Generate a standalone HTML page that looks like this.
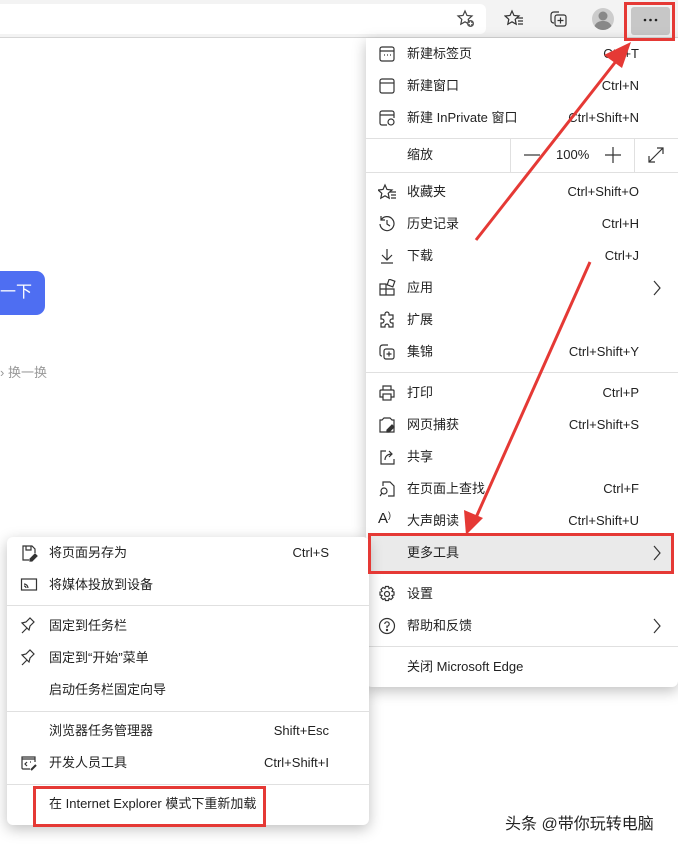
<!DOCTYPE html>
<html><head><meta charset="utf-8">
<style>
*{margin:0;padding:0;box-sizing:border-box}
body{width:678px;height:845px;overflow:hidden;background:#fff;position:relative;font-family:"Liberation Sans","Noto Sans CJK SC",sans-serif;font-size:13px;color:#222}
.abs{position:absolute}
.tb{left:0;top:0;width:678px;height:38px;background:#f3f3f3;border-bottom:1px solid #d6d6d6}
.addr{left:0;top:4px;width:486px;height:30px;background:#fff;border-radius:0 6px 6px 0}
.menu{background:#fff;box-shadow:0 4px 14px rgba(0,0,0,.25);border-radius:6px}
.row{position:absolute;height:20px;line-height:20px;white-space:nowrap}
.sc{position:absolute;height:20px;line-height:20px;text-align:right;white-space:nowrap}
.sep{position:absolute;height:1px;background:#e0e0e0}
svg.i{position:absolute;width:18px;height:18px}
</style></head><body>
<div class="abs tb"></div>
<div class="abs addr"></div>
<!-- toolbar icons -->
<svg class="abs" style="left:456px;top:9px" width="20" height="20" viewBox="0 0 20 20" fill="none" stroke="#444" stroke-width="1.2"><path d="M9 2l2 4.5 5 .5-3.8 3.3 1 4.9L9 12.8 4.8 15.2l1-4.9L2 7l5-.5z"/><circle cx="14.5" cy="14.5" r="3.5" fill="#555" stroke="none"/><path d="M14.5 12.5v4M12.5 14.5h4" stroke="#fff"/></svg>
<svg class="abs" style="left:504px;top:9px" width="20" height="20" viewBox="0 0 20 20" fill="none" stroke="#333" stroke-width="1.2"><path d="M8 2l2 4.5 5 .5-3.8 3.3 1 4.9L8 12.8 3.8 15.2l1-4.9L1 7l5-.5z"/><path d="M13 9h6M14 12h5M14 15h5"/></svg>
<svg class="abs" style="left:549px;top:9px" width="20" height="20" viewBox="0 0 20 20" fill="none" stroke="#333" stroke-width="1.2"><path d="M5 14c-2 0-3-1-3-3V6c0-2 1-3 3-3h5"/><rect x="6" y="6" width="11" height="11" rx="2"/><path d="M11.5 8.5v6M8.5 11.5h6"/></svg>
<svg class="abs" style="left:591px;top:7px" width="24" height="24" viewBox="0 0 24 24"><circle cx="12" cy="12" r="11" fill="#ccc"/><circle cx="12" cy="9" r="4.5" fill="#888"/><path d="M3.5 19c2-4 5-5 8.5-5s6.5 1 8.5 5A11 11 0 0 1 3.5 19z" fill="#888"/></svg>
<div class="abs" style="left:631px;top:7px;width:39px;height:28px;background:#c7c7c7;border-radius:3px"></div>
<svg class="abs" style="left:631px;top:7px" width="39" height="28"><circle cx="14" cy="13" r="1.3" fill="#222"/><circle cx="19.5" cy="13" r="1.3" fill="#222"/><circle cx="25" cy="13" r="1.3" fill="#222"/></svg>

<!-- page content -->
<div class="abs" style="left:-10px;top:271px;width:55px;height:44px;background:#4e6ef2;border-radius:9px;color:#fff;font-size:16px;line-height:44px;padding-left:10px">一下</div>
<div class="abs" style="left:0;top:362px;color:#999;font-size:13px">› 换一换</div>

<!-- main menu -->
<div class="abs menu" style="left:366px;top:38px;width:312px;height:649px;border-radius:0 0 6px 6px"></div>
<div class="abs" style="left:368px;top:536px;width:305px;height:35px;background:#eaeaea"></div>
<div class="sep" style="left:366px;top:138px;width:312px"></div>
<div class="sep" style="left:366px;top:172px;width:312px"></div>
<div class="sep" style="left:510px;top:138px;width:1px;height:34px"></div>
<div class="sep" style="left:634px;top:138px;width:1px;height:34px"></div>
<div class="sep" style="left:366px;top:372px;width:312px"></div>
<div class="sep" style="left:366px;top:646px;width:312px"></div>

<div class="row" style="left:407px;top:44px">新建标签页</div><div class="sc" style="right:39px;top:44px">Ctrl+T</div>
<div class="row" style="left:407px;top:76px">新建窗口</div><div class="sc" style="right:39px;top:76px">Ctrl+N</div>
<div class="row" style="left:407px;top:108px">新建 InPrivate 窗口</div><div class="sc" style="right:39px;top:108px">Ctrl+Shift+N</div>
<div class="row" style="left:407px;top:145px">缩放</div>
<svg class="abs" style="left:523px;top:146px" width="18" height="18" stroke="#333" stroke-width="1.2"><path d="M1 9h16"/></svg>
<div class="row" style="left:556px;top:145px">100%</div>
<svg class="abs" style="left:604px;top:146px" width="18" height="18" stroke="#333" stroke-width="1.2"><path d="M1 9h16M9 1v16"/></svg>
<svg class="abs" style="left:647px;top:146px" width="18" height="18" viewBox="0 0 18 18" fill="none" stroke="#333" stroke-width="1.2"><path d="M2 16L16 2M10 2h6v6M2 10v6h6"/></svg>
<div class="row" style="left:407px;top:182px">收藏夹</div><div class="sc" style="right:39px;top:182px">Ctrl+Shift+O</div>
<div class="row" style="left:407px;top:214px">历史记录</div><div class="sc" style="right:39px;top:214px">Ctrl+H</div>
<div class="row" style="left:407px;top:246px">下载</div><div class="sc" style="right:39px;top:246px">Ctrl+J</div>
<div class="row" style="left:407px;top:278px">应用</div>
<div class="row" style="left:407px;top:310px">扩展</div>
<div class="row" style="left:407px;top:342px">集锦</div><div class="sc" style="right:39px;top:342px">Ctrl+Shift+Y</div>
<div class="row" style="left:407px;top:383px">打印</div><div class="sc" style="right:39px;top:383px">Ctrl+P</div>
<div class="row" style="left:407px;top:415px">网页捕获</div><div class="sc" style="right:39px;top:415px">Ctrl+Shift+S</div>
<div class="row" style="left:407px;top:447px">共享</div>
<div class="row" style="left:407px;top:479px">在页面上查找</div><div class="sc" style="right:39px;top:479px">Ctrl+F</div>
<div class="row" style="left:407px;top:511px">大声朗读</div><div class="sc" style="right:39px;top:511px">Ctrl+Shift+U</div>
<div class="row" style="left:407px;top:543px">更多工具</div>
<div class="row" style="left:407px;top:584px">设置</div>
<div class="row" style="left:407px;top:616px">帮助和反馈</div>
<div class="row" style="left:407px;top:657px">关闭 Microsoft Edge</div>
<svg class="abs" style="left:650px;top:279px" width="14" height="18" fill="none" stroke="#333" stroke-width="1.2"><path d="M4 2l6 7-6 7"/></svg>
<svg class="abs" style="left:650px;top:544px" width="14" height="18" fill="none" stroke="#333" stroke-width="1.2"><path d="M4 2l6 7-6 7"/></svg>
<svg class="abs" style="left:650px;top:617px" width="14" height="18" fill="none" stroke="#333" stroke-width="1.2"><path d="M4 2l6 7-6 7"/></svg>

<!-- main menu icons -->
<svg class="i" style="left:378px;top:45px" viewBox="0 0 18 18" fill="none" stroke="#333" stroke-width="1.2"><rect x="2" y="2" width="14" height="14" rx="2"/><path d="M2 6h14M6 10h1M9 10h1M12 10h1"/></svg>
<svg class="i" style="left:378px;top:77px" viewBox="0 0 18 18" fill="none" stroke="#333" stroke-width="1.2"><rect x="2" y="2" width="14" height="14" rx="2"/><path d="M2 6h14"/></svg>
<svg class="i" style="left:378px;top:109px" viewBox="0 0 18 18" fill="none" stroke="#333" stroke-width="1.2"><path d="M9 16H4a2 2 0 0 1-2-2V4a2 2 0 0 1 2-2h10a2 2 0 0 1 2 2v5M2 6h14"/><circle cx="13" cy="13" r="3"/></svg>
<svg class="i" style="left:378px;top:183px" viewBox="0 0 18 18" fill="none" stroke="#333" stroke-width="1.2"><path d="M7 2l2 4.5 5 .5-3.8 3.3 1 4.9L7 12.8 2.8 15.2l1-4.9L0 7l5-.5z"/><path d="M12 9h6M13 12h5M13 15h5"/></svg>
<svg class="i" style="left:378px;top:215px" viewBox="0 0 18 18" fill="none" stroke="#333" stroke-width="1.2"><path d="M3 5a7 7 0 1 1-1 4M3 1v4h4M9 5v4l3 2"/></svg>
<svg class="i" style="left:378px;top:247px" viewBox="0 0 18 18" fill="none" stroke="#333" stroke-width="1.2"><path d="M9 2v11M4 8l5 5 5-5M3 16h12"/></svg>
<svg class="i" style="left:378px;top:279px" viewBox="0 0 18 18" fill="none" stroke="#333" stroke-width="1.2"><path d="M2 5h6v11H2zM8 10h8v6H8zM2 10h6"/><rect x="10" y="1" width="6" height="6" transform="rotate(20 13 4)"/></svg>
<svg class="i" style="left:378px;top:311px" viewBox="0 0 18 18" fill="none" stroke="#333" stroke-width="1.2"><path d="M7 3a2 2 0 0 1 4 0v1h4v4h-1a2 2 0 0 0 0 4h1v4h-4v-1a2 2 0 0 0-4 0v1H3v-4h1a2 2 0 0 0 0-4H3V4h4z"/></svg>
<svg class="i" style="left:378px;top:343px" viewBox="0 0 18 18" fill="none" stroke="#333" stroke-width="1.2"><path d="M4 13c-2 0-2-1-2-3V5c0-2 1-3 3-3h5"/><rect x="6" y="6" width="10" height="10" rx="2"/><path d="M11 8.5v5M8.5 11h5"/></svg>
<svg class="i" style="left:378px;top:384px" viewBox="0 0 18 18" fill="none" stroke="#333" stroke-width="1.2"><path d="M5 6V2h8v4M5 13H2V7a1 1 0 0 1 1-1h12a1 1 0 0 1 1 1v6h-3"/><rect x="5" y="10" width="8" height="6"/></svg>
<svg class="i" style="left:378px;top:416px" viewBox="0 0 18 18" fill="none" stroke="#333" stroke-width="1.2"><path d="M6 2h6l2 2h2v12H2V4h2z"/><path d="M9 14l5-5 2 2-5 5H9z" fill="#333"/></svg>
<svg class="i" style="left:378px;top:448px" viewBox="0 0 18 18" fill="none" stroke="#333" stroke-width="1.2"><path d="M8 3H3v13h13v-5M7 12c0-4 3-6 7-6M11 3l3 3-3 3"/></svg>
<svg class="i" style="left:378px;top:480px" viewBox="0 0 18 18" fill="none" stroke="#333" stroke-width="1.2"><path d="M5 6V2h7l4 4v10h-6"/><circle cx="6" cy="11" r="3"/><path d="M4 13l-2 3"/></svg>
<div class="abs" style="left:378px;top:510px;font-size:15px">A<span style="font-size:9px;vertical-align:top">)</span></div>
<svg class="i" style="left:378px;top:585px" viewBox="0 0 18 18" fill="none" stroke="#333" stroke-width="1.2"><path d="M7.5 1.5h3l.5 2 2-1 2 2-1 2 2 .5v3l-2 .5 1 2-2 2-2-1-.5 2h-3l-.5-2-2 1-2-2 1-2-2-.5v-3l2-.5-1-2 2-2 2 1z"/><circle cx="9" cy="9" r="2.5"/></svg>
<svg class="i" style="left:378px;top:617px" viewBox="0 0 18 18" fill="none" stroke="#333" stroke-width="1.2"><circle cx="9" cy="9" r="7.5"/><path d="M6.8 7a2.2 2.2 0 1 1 2.2 2.2V11"/><circle cx="9" cy="13" r=".6" fill="#333"/></svg>

<!-- submenu -->
<div class="abs menu" style="left:7px;top:537px;width:362px;height:288px"></div>
<div class="sep" style="left:7px;top:605px;width:362px"></div>
<div class="sep" style="left:7px;top:711px;width:362px"></div>
<div class="sep" style="left:7px;top:784px;width:362px"></div>
<div class="row" style="left:49px;top:543px">将页面另存为</div><div class="sc" style="left:250px;width:79px;top:543px">Ctrl+S</div>
<div class="row" style="left:49px;top:575px">将媒体投放到设备</div>
<div class="row" style="left:49px;top:616px">固定到任务栏</div>
<div class="row" style="left:49px;top:648px">固定到“开始”菜单</div>
<div class="row" style="left:49px;top:680px">启动任务栏固定向导</div>
<div class="row" style="left:49px;top:721px">浏览器任务管理器</div><div class="sc" style="left:230px;width:99px;top:721px">Shift+Esc</div>
<div class="row" style="left:49px;top:753px">开发人员工具</div><div class="sc" style="left:230px;width:99px;top:753px">Ctrl+Shift+I</div>
<div class="row" style="left:49px;top:794px">在 Internet Explorer 模式下重新加载</div>
<svg class="i" style="left:20px;top:544px" viewBox="0 0 18 18" fill="none" stroke="#333" stroke-width="1.2"><path d="M9 16H3V2h9l3 3v4M6 2v4h5V2"/><path d="M10 15l5-5 2 2-5 5h-2z" fill="#333"/></svg>
<svg class="i" style="left:20px;top:576px" viewBox="0 0 18 18" fill="none" stroke="#333" stroke-width="1.2"><rect x="1.5" y="3" width="15" height="11"/><path d="M4 8a4 4 0 0 1 4 4M4 10a2 2 0 0 1 2 2"/></svg>
<svg class="i" style="left:20px;top:617px" viewBox="0 0 18 18" fill="none" stroke="#333" stroke-width="1.2"><path d="M2 16l5-5M5 9l4 4 1-4 4-4-4-4-4 4-4 1z"/></svg>
<svg class="i" style="left:20px;top:649px" viewBox="0 0 18 18" fill="none" stroke="#333" stroke-width="1.2"><path d="M2 16l5-5M5 9l4 4 1-4 4-4-4-4-4 4-4 1z"/></svg>
<svg class="i" style="left:20px;top:754px" viewBox="0 0 18 18" fill="none" stroke="#333" stroke-width="1.2"><path d="M10 15H3a1 1 0 0 1-1-1V3h13v5M2 5h13M7 8l-2 2 2 2M10 8l1 0"/><path d="M11 16l5-5" stroke-width="2"/></svg>

<!-- watermark -->
<div class="abs" style="left:505px;top:810px;font-size:16px;color:#222;text-shadow:1px 1px 1px #fff,-1px -1px 1px #fff">头条 @带你玩转电脑</div>

<!-- annotations -->
<svg class="abs" style="left:0;top:0" width="678" height="845" viewBox="0 0 678 845">
<g fill="none" stroke="#e53935" stroke-width="3">
<rect x="625.5" y="3.5" width="48" height="36"/>
<rect x="369.5" y="534.5" width="303" height="38"/>
<rect x="34.5" y="787.5" width="230" height="38"/>
</g>
<path d="M476 240 L617 60" stroke="#e53935" stroke-width="3"/>
<path d="M631 42 L604 55 L622 68 Z" fill="#e53935"/>
<path d="M590 262 L474 522" stroke="#e53935" stroke-width="3"/>
<path d="M466 535 L464 510 L483 518 Z" fill="#e53935"/>
</svg>
</body></html>
